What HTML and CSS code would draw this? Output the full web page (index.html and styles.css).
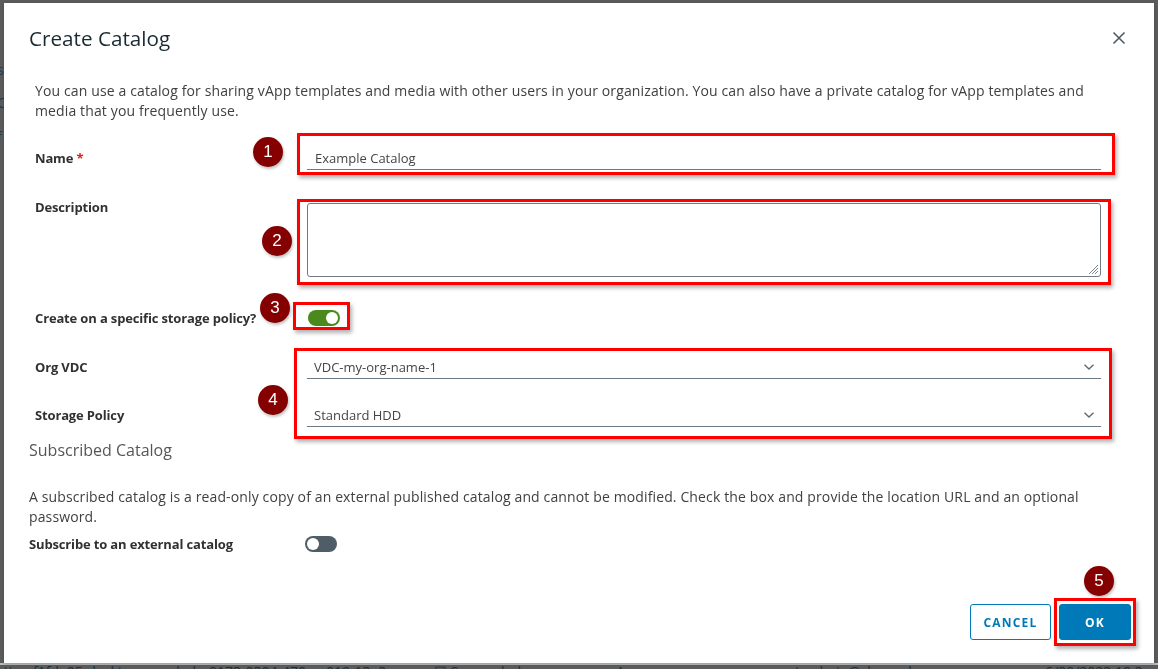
FILE: index.html
```html
<!DOCTYPE html>
<html lang="en">
<head>
<meta charset="utf-8">
<title>Create Catalog</title>
<link rel="stylesheet" href="styles.css">
</head>
<body>
<div class="backdrop">
  <div class="bd-side">
    <span class="bd-s1">s</span>
    <span class="bd-s2">C</span>
    <span class="bd-s3">f</span>
  </div>
  <div class="bd-row">
    <span class="bd-c1">ation f1fde05-desktop-vappbabe9173-0304-470a-a019-13a3</span>
    <span class="bd-c2">&#9745; Succeeded</span>
    <span class="bd-c3">vApp</span>
    <span class="bd-c4">&#9786; tcadmin@sherweb.com</span>
    <span class="bd-c5">6/30/2023 10:3</span>
  </div>
</div>

<div class="modal" role="dialog">
  <div class="modal-header">
    <h1 class="modal-title">Create Catalog</h1>
    <button class="close" aria-label="Close">
      <svg width="14" height="14" viewBox="0 0 14 14"><path d="M1.5 1.5 L12.5 12.5 M12.5 1.5 L1.5 12.5" stroke="#4c5b63" stroke-width="1.6" fill="none"/></svg>
    </button>
  </div>

  <p class="intro">You can use a catalog for sharing vApp templates and media with other users in your organization. You can also have a private catalog for vApp templates and media that you frequently use.</p>

  <div class="form">
    <div class="row row-name">
      <label class="lbl">Name <span class="req">*</span></label>
      <div class="input">Example Catalog</div>
    </div>
    <div class="row row-desc">
      <label class="lbl">Description</label>
      <div class="textarea">
        <svg class="grip" width="12" height="12" viewBox="0 0 12 12"><path d="M11 2 L2 11 M11 5 L5 11 M11 8 L8 11" stroke="#7a868c" stroke-width="1" fill="none"/></svg>
      </div>
    </div>
    <div class="row row-toggle">
      <label class="lbl">Create on a specific storage policy?</label>
      <div class="toggle on"><span class="knob"></span></div>
    </div>
    <div class="row row-sel1">
      <label class="lbl">Org VDC</label>
      <div class="select">VDC-my-org-name-1
        <svg class="chev" width="12" height="8" viewBox="0 0 12 8"><path d="M1.5 1.8 L6 6 L10.5 1.8" stroke="#5b6b73" stroke-width="1.4" fill="none"/></svg>
      </div>
    </div>
    <div class="row row-sel2">
      <label class="lbl">Storage Policy</label>
      <div class="select">Standard HDD
        <svg class="chev" width="12" height="8" viewBox="0 0 12 8"><path d="M1.5 1.8 L6 6 L10.5 1.8" stroke="#5b6b73" stroke-width="1.4" fill="none"/></svg>
      </div>
    </div>
  </div>

  <h2 class="section-title">Subscribed Catalog</h2>
  <p class="section-text">A subscribed catalog is a read-only copy of an external published catalog and cannot be modified. Check the box and provide the location URL and an optional password.</p>
  <div class="sub-row">
    <label class="lbl">Subscribe to an external catalog</label>
    <div class="toggle off"><span class="knob"></span></div>
  </div>

  <div class="modal-footer">
    <button class="btn btn-outline">CANCEL</button>
    <button class="btn btn-primary">OK</button>
  </div>

  <div class="mark box1"></div>
  <div class="mark box2"></div>
  <div class="mark box3"></div>
  <div class="mark box4"></div>
  <div class="mark box5"></div>
  <span class="badge b1">1</span>
  <span class="badge b2">2</span>
  <span class="badge b3">3</span>
  <span class="badge b4">4</span>
  <span class="badge b5">5</span>
</div>
</body>
</html>
```

FILE: styles.css
```css
* { box-sizing: border-box; }
html, body { margin: 0; padding: 0; }
body {
  width: 1158px;
  height: 669px;
  overflow: hidden;
  background: #5b5b5b;
  font-family: "Open Sans", "Noto Sans", sans-serif;
  color: #333;
}
.backdrop {
  height: 669px;
  display: flex;
  flex-direction: column;
}
.bd-side {
  display: flex;
  flex-direction: column;
  font-size: 14px;
  color: #1d3c52;
  line-height: 16px;
  margin-left: -3px;
}
.bd-s1 { margin-top: 62px; }
.bd-s2 { margin-top: 17px; }
.bd-s3 { margin-top: 18px; }
.bd-row {
  margin-top: auto;
  height: 6px;
  border-top: 2px solid #b8bdc0;
  display: flex;
  font-size: 14px;
  line-height: 16px;
  color: #1f2e36;
  white-space: nowrap;
}
.bd-row span { display: block; margin-top: -1px; }
.bd-c1 { margin-left: -4px; width: 438px; }
.bd-c2 { width: 175px; }
.bd-c3 { width: 168px; }
.bd-c4 { width: 268px; }

.modal {
  position: fixed;
  left: 4px;
  top: 3px;
  width: 1150px;
  height: 660px;
  background: #fff;
  display: flex;
  flex-direction: column;
  box-shadow: 0 1px 3px rgba(0,0,0,.2);
}
.modal-header {
  display: flex;
  justify-content: space-between;
  align-items: center;
  padding: 21px 28px 0 25px;
}
.modal-title {
  margin: 0;
  font-size: 20.7px;
  line-height: 28px;
  font-weight: 400;
  color: #1b2a32;
}
.close {
  border: 0;
  background: none;
  padding: 0;
  width: 14px;
  height: 14px;
  display: flex;
}
.intro {
  margin: 29px 0 0;
  padding: 0 53px 0 31px;
  font-size: 14px;
  line-height: 20px;
  letter-spacing: 0.13px;
  color: #404040;
}
.form {
  padding: 0 53px 0 31px;
  display: flex;
  flex-direction: column;
}
.row {
  display: grid;
  grid-template-columns: 272px 1fr;
  align-items: center;
}
.lbl {
  font-size: 13px;
  font-weight: 700;
  line-height: 16px;
  letter-spacing: -0.15px;
  color: #313131;
}
.req { color: #e02020; font-weight: 700; }
.row-name { margin-top: 25px; height: 24px; }
.input, .select {
  height: 24px;
  border-bottom: 1px solid #6b7a82;
  font-size: 13px;
  line-height: 22px;
  padding-left: 8px;
  color: #454545;
  display: flex;
  align-items: center;
  justify-content: space-between;
}
.select { padding-left: 7px; padding-right: 6px; }
.row-desc { margin-top: 29px; align-items: start; }
.textarea {
  position: relative;
  margin-top: 4px;
  height: 74px;
  border: 1px solid #6f7c83;
  border-radius: 3px;
}
.grip { position: absolute; right: 1px; bottom: 1px; }
.row-toggle { margin-top: 31px; height: 20px; }
.row-sel1 { margin-top: 27px; }
.row-sel2 { margin-top: 24px; }

.toggle {
  width: 32px;
  height: 16px;
  border-radius: 8px;
  position: relative;
}
.toggle.on { background: #4a8a1c; margin-left: 1px; }
.toggle.off { background: #4f5e66; }
.knob {
  position: absolute;
  top: 2px;
  width: 12px;
  height: 12px;
  border-radius: 50%;
  background: #fff;
}
.toggle.on .knob { right: 2px; }
.toggle.off .knob { left: 2px; }

.section-title {
  margin: 12px 0 0;
  padding-left: 25px;
  font-size: 16px;
  line-height: 22px;
  font-weight: 400;
  color: #565656;
}
.section-text {
  margin: 26px 0 0;
  padding: 0 53px 0 25px;
  font-size: 14px;
  line-height: 20px;
  letter-spacing: 0.13px;
  color: #404040;
}
.sub-row {
  margin-top: 7px;
  padding-left: 25px;
  height: 20px;
  display: grid;
  grid-template-columns: 276px 32px;
  align-items: center;
}
.modal-footer {
  margin-top: auto;
  padding: 0 23px 23px 0;
  display: flex;
  justify-content: flex-end;
  gap: 8px;
}
.btn {
  height: 36px;
  border-radius: 3px;
  font-family: "Open Sans", sans-serif;
  font-size: 12px;
  font-weight: 700;
  letter-spacing: 1.2px;
  padding: 0;
}
.btn-outline {
  width: 81px;
  background: #fff;
  border: 1px solid #0079b8;
  color: #0079b8;
}
.btn-primary {
  width: 72px;
  background: #0079b8;
  border: 1px solid #0079b8;
  color: #fff;
}

.mark {
  position: absolute;
  border: 3px solid #ff0000;
  box-shadow: 2px 3px 4px rgba(0,0,0,.3);
  pointer-events: none;
}
.box1 { left: 293px; top: 130px; width: 818px; height: 42px; }
.box2 { left: 293px; top: 196px; width: 814px; height: 86px; }
.box3 { left: 289px; top: 299px; width: 57px; height: 28px; }
.box4 { left: 290px; top: 345px; width: 818px; height: 91px; }
.box5 { left: 1050px; top: 595px; width: 82px; height: 48px; }

.badge {
  position: absolute;
  width: 30px;
  height: 30px;
  border-radius: 50%;
  background: #850000;
  color: #fff;
  font-family: "Liberation Sans", Arial, sans-serif;
  font-size: 17px;
  line-height: 30px;
  text-align: center;
  box-shadow: 1px 2px 3px rgba(0,0,0,.25);
}
.b1 { left: 249px; top: 134px; }
.b2 { left: 258px; top: 223px; }
.b3 { left: 256px; top: 290px; }
.b4 { left: 254px; top: 382px; }
.b5 { left: 1080px; top: 563px; }
```
